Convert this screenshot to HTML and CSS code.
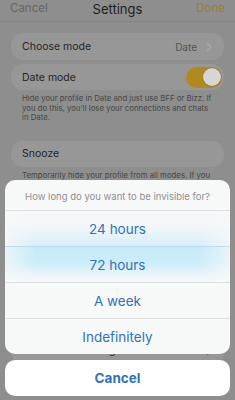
FILE: index.html
```html
<!DOCTYPE html>
<html>
<head>
<meta charset="utf-8">
<link rel="stylesheet" href="styles.css">
</head>
<body>
<div class="page">
  <header class="nav">
    <span class="nav-cancel">Cancel</span>
    <span class="nav-title">Settings</span>
    <span class="nav-done">Done</span>
  </header>
  <div class="content">
    <div class="card card-first">
      <span class="label">Choose mode</span>
      <span class="value">Date
        <svg class="chev" width="6" height="10" viewBox="0 0 6 10"><path d="M1 1l4 4-4 4" fill="none" stroke="#a9a9a9" stroke-width="1.3"/></svg>
      </span>
    </div>
    <div class="card card-second">
      <span class="label">Date mode</span>
      <span class="toggle"><span class="knob"></span></span>
    </div>
    <p class="desc">Hide your profile in Date and just use BFF or Bizz. If you do this, you'll lose your connections and chats in Date.</p>
    <div class="card card-snooze">
      <span class="label">Snooze</span>
    </div>
    <p class="desc">Temporarily hide your profile from all modes. If you do, you won't lose any connections or chats.</p>
    <div class="card card-notif">
      <span class="label">Notification settings</span>
      <svg class="chev" width="6" height="10" viewBox="0 0 6 10"><path d="M1 1l4 4-4 4" fill="none" stroke="#6e6e6e" stroke-width="1.3"/></svg>
    </div>
  </div>

  <div class="sheet">
    <div class="sheet-group">
      <div class="sheet-title">How long do you want to be invisible for?</div>
      <div class="sheet-opt opt-24">24 hours</div>
      <div class="sheet-opt opt-72">72 hours</div>
      <div class="sheet-opt">A week</div>
      <div class="sheet-opt">Indefinitely</div>
    </div>
    <div class="sheet-cancel">Cancel</div>
  </div>
</div>
</body>
</html>
```
FILE: styles.css
```css
* { box-sizing: border-box; }
html, body { margin: 0; padding: 0; }
body {
  width: 235px;
  height: 400px;
  overflow: hidden;
  background: #8e8e8e;
  font-family: Inter, "Noto Sans", sans-serif;
}
.page {
  position: relative;
  width: 235px;
  height: 400px;
  overflow: hidden;
}
.nav {
  height: 22px;
  display: flex;
  align-items: center;
  justify-content: space-between;
  padding: 0 10px 5px 10px;
  border-bottom: 1px solid #868686;
  position: relative;
}
.nav-cancel { font-size: 11.5px; color: #666666; }
.nav-title {
  position: absolute;
  left: 0; right: 0;
  text-align: center;
  font-size: 13px;
  color: #1d1d1d;
  top: 1px;
}
.nav-done { font-size: 11.5px; color: #9c7f26; }

.content { padding: 0 11px; }
.card {
  background: #979797;
  border-radius: 12px;
  display: flex;
  align-items: center;
  justify-content: space-between;
  padding: 0 11px;
  height: 26px;
}
.label { font-size: 10.5px; color: #262626; }
.card-first { margin-top: 11px; height: 27px; }
.card-second { margin-top: 4px; padding-right: 2px; }
.value { font-size: 10px; color: #555; display: flex; align-items: center; gap: 9px; padding-right: 1px; }
.chev { display: block; }
.toggle {
  width: 36px;
  height: 21px;
  border-radius: 11px;
  background: #b08a1f;
  display: flex;
  align-items: center;
  justify-content: flex-end;
  padding: 1.5px;
}
.knob {
  width: 18px;
  height: 18px;
  border-radius: 50%;
  background: #d6d6d6;
  box-shadow: 0 0 1px rgba(0,0,0,.4);
}
.desc {
  margin: 4px 0 0 0;
  padding: 0 11px;
  font-size: 7.8px;
  line-height: 9.6px;
  color: #474747;
}
.card-snooze { margin-top: 18px; }
.card-notif { margin-top: 148px; padding-right: 12px; }

.sheet {
  position: absolute;
  left: 5px;
  right: 5px;
  bottom: 4px;
  display: flex;
  flex-direction: column;
  gap: 6px;
}
.sheet-group {
  background: #f7f8f8;
  border-radius: 10px;
  overflow: hidden;
}
.sheet-title {
  height: 30px;
  display: flex;
  align-items: center;
  justify-content: center;
  font-size: 9.5px;
  color: #8f8f93;
  padding-top: 2px;
}
.sheet-opt {
  height: 36px;
  border-top: 1px solid #dedfe0;
  display: flex;
  align-items: center;
  justify-content: center;
  font-size: 13.5px;
  color: #2f73b6;
}
.opt-24 {
  background:
    linear-gradient(to right, rgba(247,248,248,.8), rgba(247,248,248,0) 14%, rgba(247,248,248,0) 86%, rgba(247,248,248,.8)),
    linear-gradient(to bottom, #f6f7f8 35%, #d6eff9 100%);
}
.opt-72 {
  border-top-color: #bfdde8;
  background:
    linear-gradient(to right, rgba(247,248,248,.7), rgba(247,248,248,0) 14%, rgba(247,248,248,0) 86%, rgba(247,248,248,.7)),
    linear-gradient(to bottom, #c6eaf8 0%, #cbedf9 45%, #eef6f9 85%, #f7f8f8 100%);
}
.sheet-cancel {
  height: 36px;
  background: #ffffff;
  border-radius: 10px;
  display: flex;
  align-items: center;
  justify-content: center;
  font-size: 13.5px;
  font-weight: 700;
  color: #2f73b6;
}
```
